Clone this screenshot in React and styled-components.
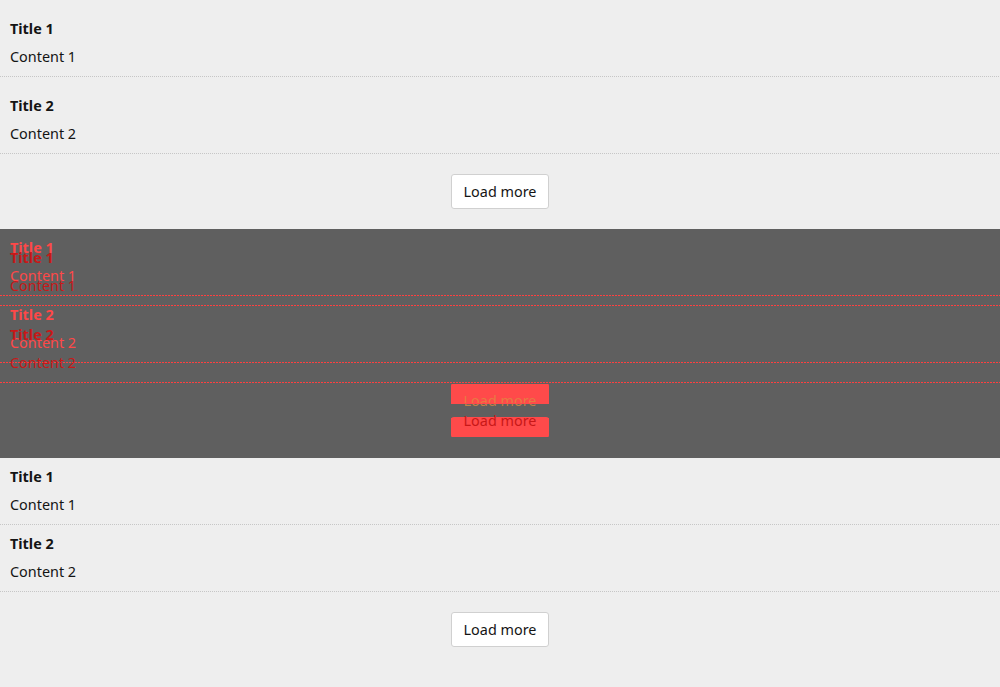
import React from "react";
import styled, { createGlobalStyle, css } from "styled-components";

const items = [
  { title: "Title 1", content: "Content 1" },
  { title: "Title 2", content: "Content 2" },
];

const GlobalStyle = createGlobalStyle`
  html, body {
    margin: 0;
    background: #eeeeee;
  }

  body {
    font-family: "Noto Sans", "Open Sans", sans-serif;
    font-size: 14.4px;
    color: #141414;
  }
`;

const ItemList = ({ spacious, tone }) => (
  <List>
    {items.map((item) => (
      <Item key={item.title} $spacious={spacious} $tone={tone}>
        <Title>{item.title}</Title>
        <Content>{item.content}</Content>
      </Item>
    ))}
    <Footer>
      <LoadMore $tone={tone}>Load more</LoadMore>
    </Footer>
  </List>
);

const App = () => (
  <Page>
    <GlobalStyle />
    <ItemList spacious />
    <DiffPanel>
      <Layer>
        <ItemList tone="light" />
      </Layer>
      <Layer>
        <ItemList spacious tone="dark" />
      </Layer>
    </DiffPanel>
    <ItemList />
  </Page>
);

const tones = {
  light: "#ff4848",
  dark: "#c81818",
};

const Page = styled.div`
  display: flex;
  flex-direction: column;
`;

const List = styled.div`
  display: flex;
  flex-direction: column;
`;

const Item = styled.div`
  display: flex;
  flex-direction: column;
  padding: ${(p) => (p.$spacious ? "19px" : "9px")} 10px 0;
  color: ${(p) => (p.$tone ? tones[p.$tone] : "inherit")};

  &::after {
    content: "";
    height: 1px;
    margin: 9px -10px 0;
    background: linear-gradient(
        90deg,
        ${(p) => (p.$tone ? "#ff3f3f" : "#c6c6c6")} ${(p) => (p.$tone ? "67%" : "50%")},
        transparent 0
      )
      0 0 / ${(p) => (p.$tone ? "3px" : "2px")} 1px repeat-x;
  }
`;

const Title = styled.b`
  font-weight: 700;
  line-height: 20px;
`;

const Content = styled.p`
  margin: 8px 0 0;
  line-height: 20px;
`;

const Footer = styled.div`
  display: flex;
  justify-content: center;
  padding: 20px 0;
`;

const LoadMore = styled.button`
  width: 98px;
  height: 35px;
  padding: 0;
  font-family: inherit;
  font-size: 14.4px;
  color: #141414;
  background: #fff;
  border: 1px solid #d0d0d0;
  border-radius: 3px;

  ${(p) =>
    p.$tone === "light" &&
    css`
      color: rgba(222, 140, 64, 0.75);
      border-color: transparent;
      background: linear-gradient(#ff4a4a 0 20px, transparent 20px);
    `}

  ${(p) =>
    p.$tone === "dark" &&
    css`
      color: #c81818;
      border-color: transparent;
      background: linear-gradient(transparent 0 14px, #ff4a4a 14px);
    `}
`;

const DiffPanel = styled.div`
  display: grid;
  height: 229px;
  overflow: hidden;
  background: #5f5f5f;
`;

const Layer = styled.div`
  grid-area: 1 / 1;
`;

export default App;
